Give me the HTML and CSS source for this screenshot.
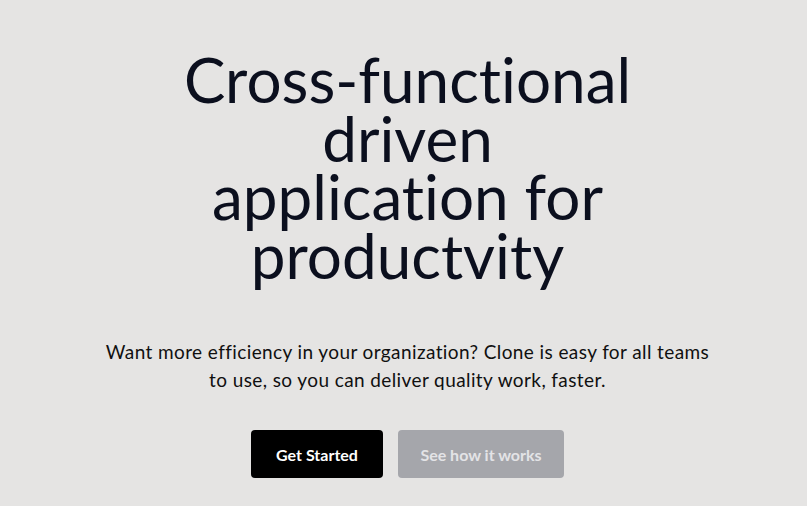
FILE: index.html
```html
<!DOCTYPE html>
<html lang="en">
<head>
<meta charset="utf-8">
<title>Clone</title>
<link rel="stylesheet" href="styles.css">
</head>
<body>
<main class="hero">
  <h1 class="hero-title">Cross-functional driven application for productvity</h1>
  <p class="hero-text">Want more efficiency in your organization? Clone is easy for all teams to use, so you can deliver quality work, faster.</p>
  <div class="hero-actions">
    <a class="btn btn-primary" href="#">Get Started</a>
    <a class="btn btn-secondary" href="#">See how it works</a>
  </div>
</main>
</body>
</html>
```

FILE: styles.css
```css
* { box-sizing: border-box; }
html, body { margin: 0; padding: 0; }
body {
  background: #e5e4e3;
  font-family: "Lato", "Noto Sans", sans-serif;
  font-variant-ligatures: none;
  color: #0b0f1e;
  width: 807px;
  height: 506px;
  overflow: hidden;
}
.hero {
  display: flex;
  flex-direction: column;
  align-items: center;
  padding: 50px 0 0 8px;
  text-align: center;
}
.hero-title {
  margin: 0;
  max-width: 455px;
  font-size: 62px;
  font-weight: 400;
  line-height: 58.5px;
  color: #0b0f1e;
}
.hero-text {
  margin: 54px 0 0;
  max-width: 612px;
  font-size: 19px;
  letter-spacing: 0.4px;
  line-height: 28px;
  color: #101010;
}
.hero-actions {
  display: flex;
  gap: 15px;
  margin-top: 36px;
}
.btn {
  display: flex;
  align-items: center;
  justify-content: center;
  height: 48px;
  border-radius: 4px;
  font-size: 16px;
  font-weight: 700;
  text-decoration: none;
}
.btn-primary {
  width: 132px;
  background: #000;
  color: #fff;
}
.btn-secondary {
  width: 166px;
  background: #a5a6ab;
  color: #e3e3e6;
}
```
